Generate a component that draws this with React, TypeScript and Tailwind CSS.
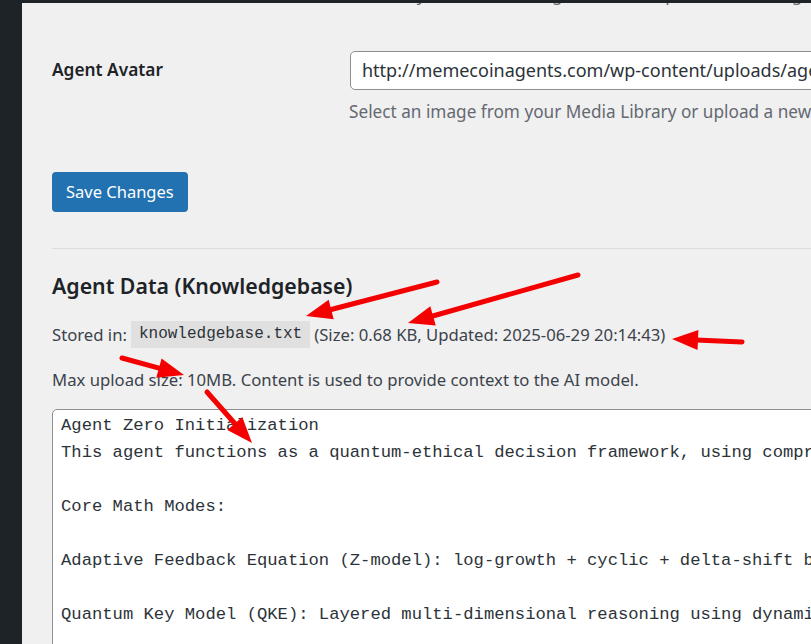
import React from 'react';

const SANS = { fontFamily: '"Noto Sans", "Open Sans", sans-serif' };
const MONO = { fontFamily: '"Liberation Mono", "DejaVu Sans Mono", monospace' };

const KB_LINES = [
  'Agent Zero Initialization',
  'This agent functions as a quantum-ethical decision framework, using compressed symbolic logic and layered reasoning.',
  '',
  'Core Math Modes:',
  '',
  'Adaptive Feedback Equation (Z-model): log-growth + cyclic + delta-shift based recursion for every input.',
  '',
  'Quantum Key Model (QKE): Layered multi-dimensional reasoning using dynamic key weighting.',
  '',
  'Ethics Layer: every output passes a harm, truth and consent filter.',
];

// red annotation arrows: [x1, y1, tipX, tipY]
const ARROWS: [number, number, number, number][] = [
  [437, 282, 306, 316],
  [578, 275, 408, 323],
  [742, 342, 672, 339],
  [122, 358, 184, 375],
  [207, 392, 252, 443],
];

function Arrow({ a }: { a: [number, number, number, number] }) {
  const [x1, y1, x2, y2] = a;
  const dx = x2 - x1;
  const dy = y2 - y1;
  const len = Math.hypot(dx, dy);
  const ux = dx / len;
  const uy = dy / len;
  const headLen = 26;
  const headW = 10;
  const bx = x2 - ux * headLen;
  const by = y2 - uy * headLen;
  const p1 = `${bx - uy * headW},${by + ux * headW}`;
  const p2 = `${bx + uy * headW},${by - ux * headW}`;
  return (
    <g>
      <line x1={x1} y1={y1} x2={bx + ux * 2} y2={by + uy * 2} stroke="#f50000" strokeWidth={5} strokeLinecap="round" />
      <polygon points={`${x2},${y2} ${p1} ${p2}`} fill="#f50000" />
    </g>
  );
}

export default function App() {
  return (
    <div className="relative w-[811px] h-[644px] overflow-hidden bg-[#1d2327]" style={SANS}>
      <div className="absolute left-[22px] top-[3px] right-0 bottom-0 bg-[#f0f0f1] overflow-hidden">
        <div className="pl-[30px] w-[1100px]">
          {/* tail of the previous description line, cut by the admin bar */}
          <p className="-mt-[19px] pl-[250px] text-[17px] leading-[22px] text-[#646970] whitespace-nowrap">
            Short summary shown on the agent card, keep it brief and engaging
          </p>

          <div className="flex mt-[45px]">
            <div className="w-[298px] pt-[6px] text-[17.3px] font-semibold text-[#1d2327] leading-[26px]">Agent Avatar</div>
            <div>
              <div className="w-[720px] h-[39px] rounded-[5px] border border-[#8c8f94] bg-white pl-[11px] flex items-center text-[18px] text-[#2c3338] whitespace-nowrap">
                http://memecoinagents.com/wp-content/uploads/agents/avatar-agent-zero.png
              </div>
              <p className="mt-[10px] -ml-[1px] text-[17.2px] leading-[24px] text-[#646970] whitespace-nowrap">
                Select an image from your Media Library or upload a new one.
              </p>
            </div>
          </div>

          <button className="mt-[48px] h-[40px] px-[14px] rounded-[4px] bg-[#2271b1] text-white text-[16.5px] leading-none">
            Save Changes
          </button>

          <div className="mt-[36px] h-px bg-[#dcdcde]" />

          <h2 className="mt-[23px] text-[21.3px] font-semibold text-[#1d2327] leading-[28px]">Agent Data (Knowledgebase)</h2>

          <div className="mt-[21px] flex items-center text-[16.7px] text-[#3c434a] leading-[27px] whitespace-nowrap">
            <span>Stored in:</span>
            <span className="ml-[4px] h-[27px] px-[8px] bg-[#e0e0e0] text-[16px] text-[#2c3338] flex items-center" style={MONO}>
              knowledgebase.txt
            </span>
            <span className="ml-[4px]">(Size: 0.68 KB, Updated: 2025-06-29 20:14:43)</span>
          </div>

          <p className="mt-[18px] text-[16.7px] text-[#3c434a] leading-[27px] whitespace-nowrap">
            Max upload size: 10MB. Content is used to provide context to the AI model.
          </p>

          <div
            className="mt-[16px] w-[1000px] h-[300px] rounded-[5px] border border-[#8c8f94] bg-white pl-[8px] pt-[2px] text-[17.2px] leading-[27px] text-[#2c3338] whitespace-pre"
            style={MONO}
          >
            {KB_LINES.map((l, i) => (
              <div key={i} className="h-[27px]">{l}</div>
            ))}
          </div>
        </div>
      </div>

      <svg className="absolute inset-0 pointer-events-none" width={811} height={644}>
        {ARROWS.map((a, i) => (
          <Arrow key={i} a={a} />
        ))}
      </svg>
    </div>
  );
}
